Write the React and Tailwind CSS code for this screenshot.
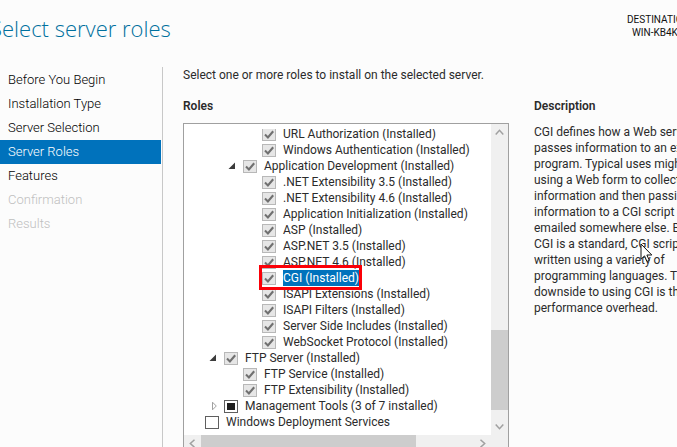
import React from 'react';

const steps = [
  { name: 'Before You Begin' },
  { name: 'Installation Type' },
  { name: 'Server Selection' },
  { name: 'Server Roles', current: true },
  { name: 'Features' },
  { name: 'Confirmation', disabled: true },
  { name: 'Results', disabled: true },
];

const roles = [
  { name: 'URL Authorization (Installed)', level: 3, state: 'installed' },
  { name: 'Windows Authentication (Installed)', level: 3, state: 'installed' },
  { name: 'Application Development (Installed)', level: 2, state: 'installed', expander: 'open' },
  { name: '.NET Extensibility 3.5 (Installed)', level: 3, state: 'installed' },
  { name: '.NET Extensibility 4.6 (Installed)', level: 3, state: 'installed' },
  { name: 'Application Initialization (Installed)', level: 3, state: 'installed' },
  { name: 'ASP (Installed)', level: 3, state: 'installed' },
  { name: 'ASP.NET 3.5 (Installed)', level: 3, state: 'installed' },
  { name: 'ASP.NET 4.6 (Installed)', level: 3, state: 'installed' },
  { name: 'CGI (Installed)', level: 3, state: 'installed', selected: true },
  { name: 'ISAPI Extensions (Installed)', level: 3, state: 'installed' },
  { name: 'ISAPI Filters (Installed)', level: 3, state: 'installed' },
  { name: 'Server Side Includes (Installed)', level: 3, state: 'installed' },
  { name: 'WebSocket Protocol (Installed)', level: 3, state: 'installed' },
  { name: 'FTP Server (Installed)', level: 1, state: 'installed', expander: 'open' },
  { name: 'FTP Service (Installed)', level: 2, state: 'installed' },
  { name: 'FTP Extensibility (Installed)', level: 2, state: 'installed' },
  { name: 'Management Tools (3 of 7 installed)', level: 1, state: 'partial', expander: 'closed' },
  { name: 'Windows Deployment Services', level: 0, state: 'empty' },
];

const indents = ['pl-[2px]', 'pl-[21px]', 'pl-[40px]', 'pl-[59px]'];

const description = [
  'CGI defines how a Web server',
  'passes information to an external',
  'program. Typical uses might include',
  'using a Web form to collect',
  'information and then passing that',
  'information to a CGI script to be',
  'emailed somewhere else. Because',
  'CGI is a standard, CGI scripts can be',
  'written using a variety of',
  'programming languages. The',
  'downside to using CGI is the',
  'performance overhead.',
];

function Expander({ kind }) {
  if (!kind) return <span className="w-[19px] shrink-0" />;
  return (
    <button
      type="button"
      aria-label={kind === 'open' ? 'Collapse' : 'Expand'}
      className="flex w-[19px] shrink-0 items-center pl-1"
    >
      {kind === 'open' ? (
        <svg width="8" height="8" viewBox="0 0 8 8">
          <path d="M7 .5V7H.5Z" fill="#3b3b3b" />
        </svg>
      ) : (
        <svg width="8" height="10" viewBox="0 0 8 10">
          <path d="M3.5 1.2V8.8L7.3 5Z" fill="#fff" stroke="#a0a0a0" />
        </svg>
      )}
    </button>
  );
}

function CheckBox({ id, state }) {
  const installed = state === 'installed';
  return (
    <span className="relative flex shrink-0">
      <input
        id={id}
        type="checkbox"
        defaultChecked={installed}
        disabled={installed}
        className={
          installed
            ? 'h-[13px] w-3.5 appearance-none border border-[#b8b8b8] bg-[#e6e6e6]'
            : 'h-[13px] w-3.5 appearance-none border border-[#5f5f5f] bg-white'
        }
      />
      {installed && (
        <svg className="pointer-events-none absolute inset-0" width="14" height="13" viewBox="0 0 14 13">
          <path d="M3 6.6 5.9 9.4 11.2 3.2" fill="none" stroke="#707070" strokeWidth="2.1" />
        </svg>
      )}
      {state === 'partial' && <span className="pointer-events-none absolute inset-[3px] bg-[#1f1f1f]" />}
    </span>
  );
}

function RoleRow({ role, index }) {
  const id = `role-${index}`;
  return (
    <li className={`flex h-4 items-center ${indents[role.level]}`}>
      <Expander kind={role.expander} />
      <span className="relative flex items-center gap-[7px]">
        <CheckBox id={id} state={role.state} />
        <label
          htmlFor={id}
          className={role.selected ? 'bg-[#0072bc] text-white' : ''}
        >
          {role.name}
        </label>
        {role.selected && (
          <span className="pointer-events-none absolute -inset-x-[3px] -top-[5px] -bottom-1 z-10 border-3 border-[#fb0007]" />
        )}
      </span>
    </li>
  );
}

function ScrollButton({ label, path }) {
  return (
    <button type="button" aria-label={label} className="flex size-[17px] shrink-0 items-center justify-center">
      <svg width="9" height="9" viewBox="0 0 9 9">
        <path d={path} fill="none" stroke="#a0a0a0" strokeWidth="1.5" />
      </svg>
    </button>
  );
}

export default function App() {
  return (
    <div className="relative flex h-screen flex-col overflow-hidden bg-[#fcfcfc] font-[Roboto,'Open_Sans',sans-serif] text-xs leading-4 whitespace-nowrap text-[#2b2b2b]">
      <header className="flex h-[67px] shrink-0 justify-between">
        <h1 className="-ml-2.5 pt-3 font-['Open_Sans','Noto_Sans',sans-serif] text-[22px] leading-8 font-light text-[#00709e]">Select server roles</h1>
        <div className="w-[50px] pt-[13px] text-[10px] leading-[13px] text-[#111]">
          <p>DESTINATION</p>
          <p className="pl-[5px]">WIN-KB4K</p>
        </div>
      </header>

      <div className="flex min-h-0 flex-1">
        <nav className="w-[163px] shrink-0 border-r border-[#c8c8c8] pt-px pr-px font-light">
          {steps.map((step) => (
            <a
              key={step.name}
              href="#"
              className={
                step.current
                  ? 'block h-6 bg-[#0072bc] pl-2 text-[13px] leading-6 text-white'
                  : step.disabled
                    ? 'block h-6 pl-2 text-[13px] leading-6 text-[#bfbfbf]'
                    : 'block h-6 pl-2 text-[13px] leading-6 text-black'
              }
            >
              {step.name}
            </a>
          ))}
        </nav>

        <main className="flex min-w-0 flex-1 flex-col pl-5">
          <p className="shrink-0">Select one or more roles to install on the selected server.</p>
          <div className="flex min-h-0 flex-1 gap-[25px] pt-[15px]">
            <section className="flex w-[326px] shrink-0 flex-col">
              <h2 className="font-semibold">Roles</h2>
              <div className="mt-[9px] flex min-h-0 flex-1 flex-col border border-b-0 border-[#a0a0a0] bg-white">
                <div className="flex min-h-0 flex-1">
                  <div className="mt-[5px] min-w-0 flex-1 overflow-hidden">
                    <ul className="-mt-[3px]">
                      {roles.map((role, i) => (
                        <RoleRow key={role.name} role={role} index={i} />
                      ))}
                    </ul>
                  </div>
                  <div className="flex w-[17px] shrink-0 flex-col bg-[#f0f0f0]">
                    <ScrollButton label="Scroll up" path="M.7 6.5 4.5 2.3 8.3 6.5" />
                    <div className="flex flex-1 flex-col justify-end">
                      <div className="h-20 bg-[#cdcdcd]" />
                    </div>
                    <div className="flex h-[25px] items-end">
                      <ScrollButton label="Scroll down" path="M.7 2.5 4.5 6.7 8.3 2.5" />
                    </div>
                  </div>
                </div>
                <div className="flex h-3 shrink-0 overflow-hidden bg-[#f0f0f0]">
                  <ScrollButton label="Scroll left" path="M6.5 .7 2.3 4.5 6.5 8.3" />
                  <div className="flex-1">
                    <div className="h-full w-[215px] bg-[#cdcdcd]" />
                  </div>
                  <ScrollButton label="Scroll right" path="M2.5 .7 6.7 4.5 2.5 8.3" />
                  <div className="w-[17px]" />
                </div>
              </div>
            </section>

            <section className="min-w-0 flex-1 overflow-hidden">
              <h2 className="font-semibold">Description</h2>
              <p className="mt-[10px]">
                {description.map((line) => (
                  <span key={line} className="block">
                    {line}
                  </span>
                ))}
              </p>
            </section>
          </div>
        </main>
      </div>

      <svg className="pointer-events-none absolute top-[243px] left-[640px]" width="13" height="20" viewBox="0 0 13 20">
        <path d="M1 1V16.2L4.5 12.9 6.9 18.4 9.3 17.4 6.9 12H11.8Z" fill="#fff" stroke="#111" />
      </svg>
    </div>
  );
}
